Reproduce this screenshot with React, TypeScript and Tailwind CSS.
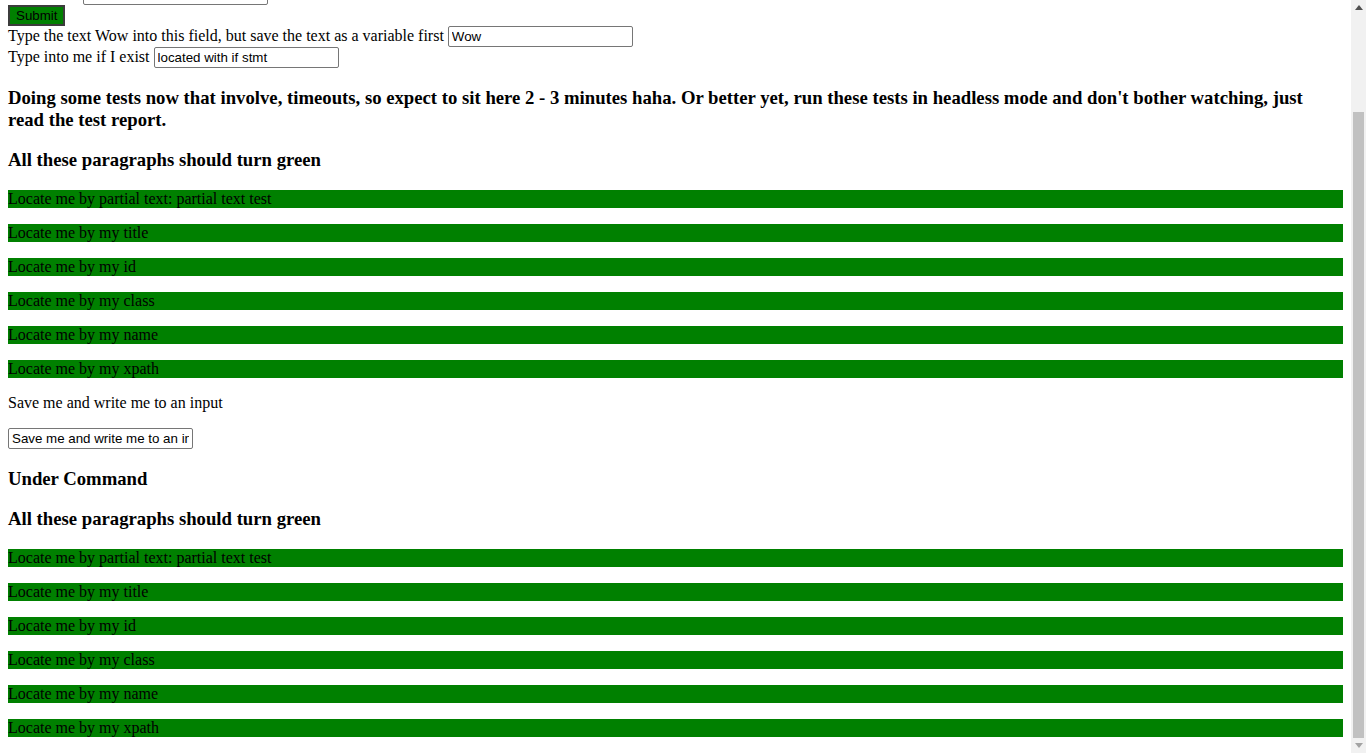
import React from 'react';

const greenLines = [
  'Locate me by partial text: partial text test',
  'Locate me by my title',
  'Locate me by my id',
  'Locate me by my class',
  'Locate me by my name',
  'Locate me by my xpath',
];

const inputCls =
  "w-[185px] h-[21px] border border-[#767676] rounded-[2px] px-[3px] bg-white text-[13.33px] font-['Liberation_Sans',Arial,sans-serif] text-black align-baseline outline-none";

function GreenBlock({ tight = false }: { tight?: boolean }) {
  return (
    <>
      <h3
        className={
          tight
            ? 'text-[18.72px] font-bold leading-[normal] mt-[17.72px] mb-[18.72px]'
            : 'text-[18.72px] font-bold leading-[normal] my-[18.72px]'
        }
      >
        All these paragraphs should turn green
      </h3>
      {greenLines.map((t) => (
        <p key={t} className="bg-[#008000] my-4">
          {t}
        </p>
      ))}
    </>
  );
}

function Scrollbar() {
  return (
    <div className="w-[15px] h-full bg-[#f1f1f1] flex flex-col shrink-0">
      <div className="h-[15px] flex items-center justify-center">
        <svg width="8" height="5" viewBox="0 0 8 5">
          <path d="M0 5 L4 0 L8 5 Z" fill="#505050" />
        </svg>
      </div>
      <div className="flex-1 flex flex-col justify-end px-[2px]">
        <div className="h-[626px] bg-[#c1c1c1]" />
      </div>
      <div className="h-[15px] flex items-center justify-center">
        <svg width="8" height="5" viewBox="0 0 8 5">
          <path d="M0 0 L8 0 L4 5 Z" fill="#a3a3a3" />
        </svg>
      </div>
    </div>
  );
}

export default function App() {
  return (
    <div className="flex w-[1366px] h-[753px] overflow-hidden bg-white">
      <div className="flex-1 flex flex-col justify-end overflow-hidden">
        <div className="px-2 font-['Liberation_Serif','Times_New_Roman',serif] text-[16px] leading-[normal] text-black">
          <div>
            Enter here: <input className={inputCls} defaultValue="" />
          </div>
          <div>
            <button className="h-[21px] px-[6px] bg-[#008000] border-2 border-[#3c3c3c] text-[13.33px] font-['Liberation_Sans',Arial,sans-serif] text-black align-baseline">
              Submit
            </button>
          </div>
          <div>
            Type the text Wow into this field, but save the text as a variable first{' '}
            <input className={inputCls} defaultValue="Wow" />
          </div>
          <div>
            Type into me if I exist <input className={inputCls} defaultValue="located with if stmt" />
          </div>
          <h3 className="text-[18.72px] font-bold leading-[normal] mt-[18.72px] pt-px mb-[17.72px]">
            Doing some tests now that involve, timeouts, so expect to sit here 2 - 3 minutes haha. Or better yet, run
            these tests in headless mode and don't bother watching, just read the test report.
          </h3>
          <GreenBlock tight />
          <p className="my-4">Save me and write me to an input</p>
          <input className={inputCls} defaultValue="Save me and write me to an input" />
          <h3 className="text-[18.72px] font-bold leading-[normal] my-[18.72px]">Under Command</h3>
          <GreenBlock />
        </div>
      </div>
      <Scrollbar />
    </div>
  );
}
